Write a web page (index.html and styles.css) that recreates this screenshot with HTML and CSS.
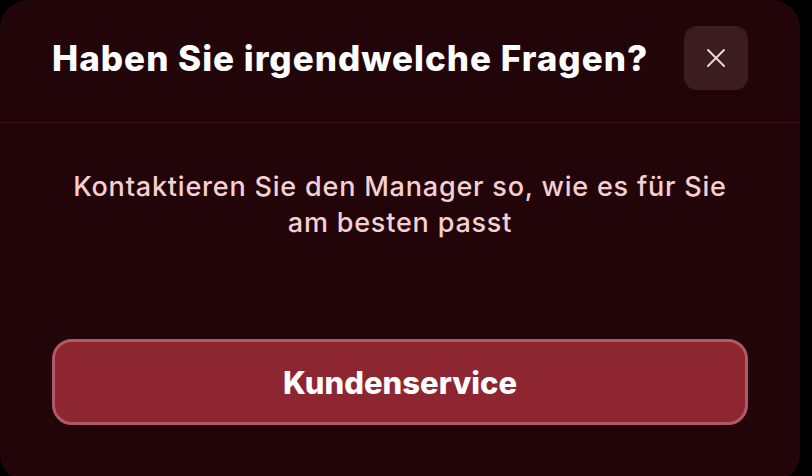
FILE: index.html
```html
<!DOCTYPE html>
<html lang="de">
<head>
  <meta charset="UTF-8" />
  <meta name="viewport" content="width=device-width, initial-scale=1" />
  <title>Fragen</title>
  <link rel="stylesheet" href="styles.css">
</head>
<body>

  <div class="modal">
    <header class="modal-head">
      <h2>Haben Sie irgendwelche Fragen?</h2>
      <button class="close-btn" aria-label="Schließen">
        <svg width="22" height="22" viewBox="0 0 22 22">
          <path d="M3 3 L19 19 M19 3 L3 19" stroke="#e9d6d7" stroke-width="2" stroke-linecap="round" fill="none"/>
        </svg>
      </button>
    </header>

    <div class="modal-body">
      <p>Kontaktieren Sie den Manager so, wie es für Sie<br>am besten passt</p>
      <button class="service-btn">Kundenservice</button>
    </div>
  </div>

</body>
</html>
```

FILE: styles.css
```css
body { margin: 0; background: #000; font-family: Inter, "Noto Sans", sans-serif; overflow: hidden; }
.modal {
  width: 800px; height: 482px;
  background: #220509; border-radius: 28px;
  box-sizing: border-box;
}
.modal-head {
  display: flex; align-items: center; justify-content: space-between;
  padding: 26px 52px 32px 52px;
  border-bottom: 1px solid #440d17;
}
.modal-head h2 {
  margin: 0; color: #fff;
  font-size: 35px; font-weight: 800; letter-spacing: 1px;
}
.close-btn {
  width: 64px; height: 64px; border: none; border-radius: 13px;
  background: #3b1c20; display: flex; align-items: center; justify-content: center;
  padding: 0; cursor: pointer;
}
.modal-body { padding: 46px 52px 0 52px; text-align: center; }
.modal-body p {
  margin: 0; color: #f6d0d1;
  font-size: 27px; font-weight: 500; line-height: 36px; letter-spacing: 0.8px;
}
.service-btn {
  display: block; width: 100%; height: 86px; margin-top: 98px;
  background: #8e2631; border: 3px solid #b05a64; border-radius: 20px;
  color: #fff; font-family: Inter, "Noto Sans", sans-serif;
  font-size: 31px; font-weight: 800; cursor: pointer;
}
```
